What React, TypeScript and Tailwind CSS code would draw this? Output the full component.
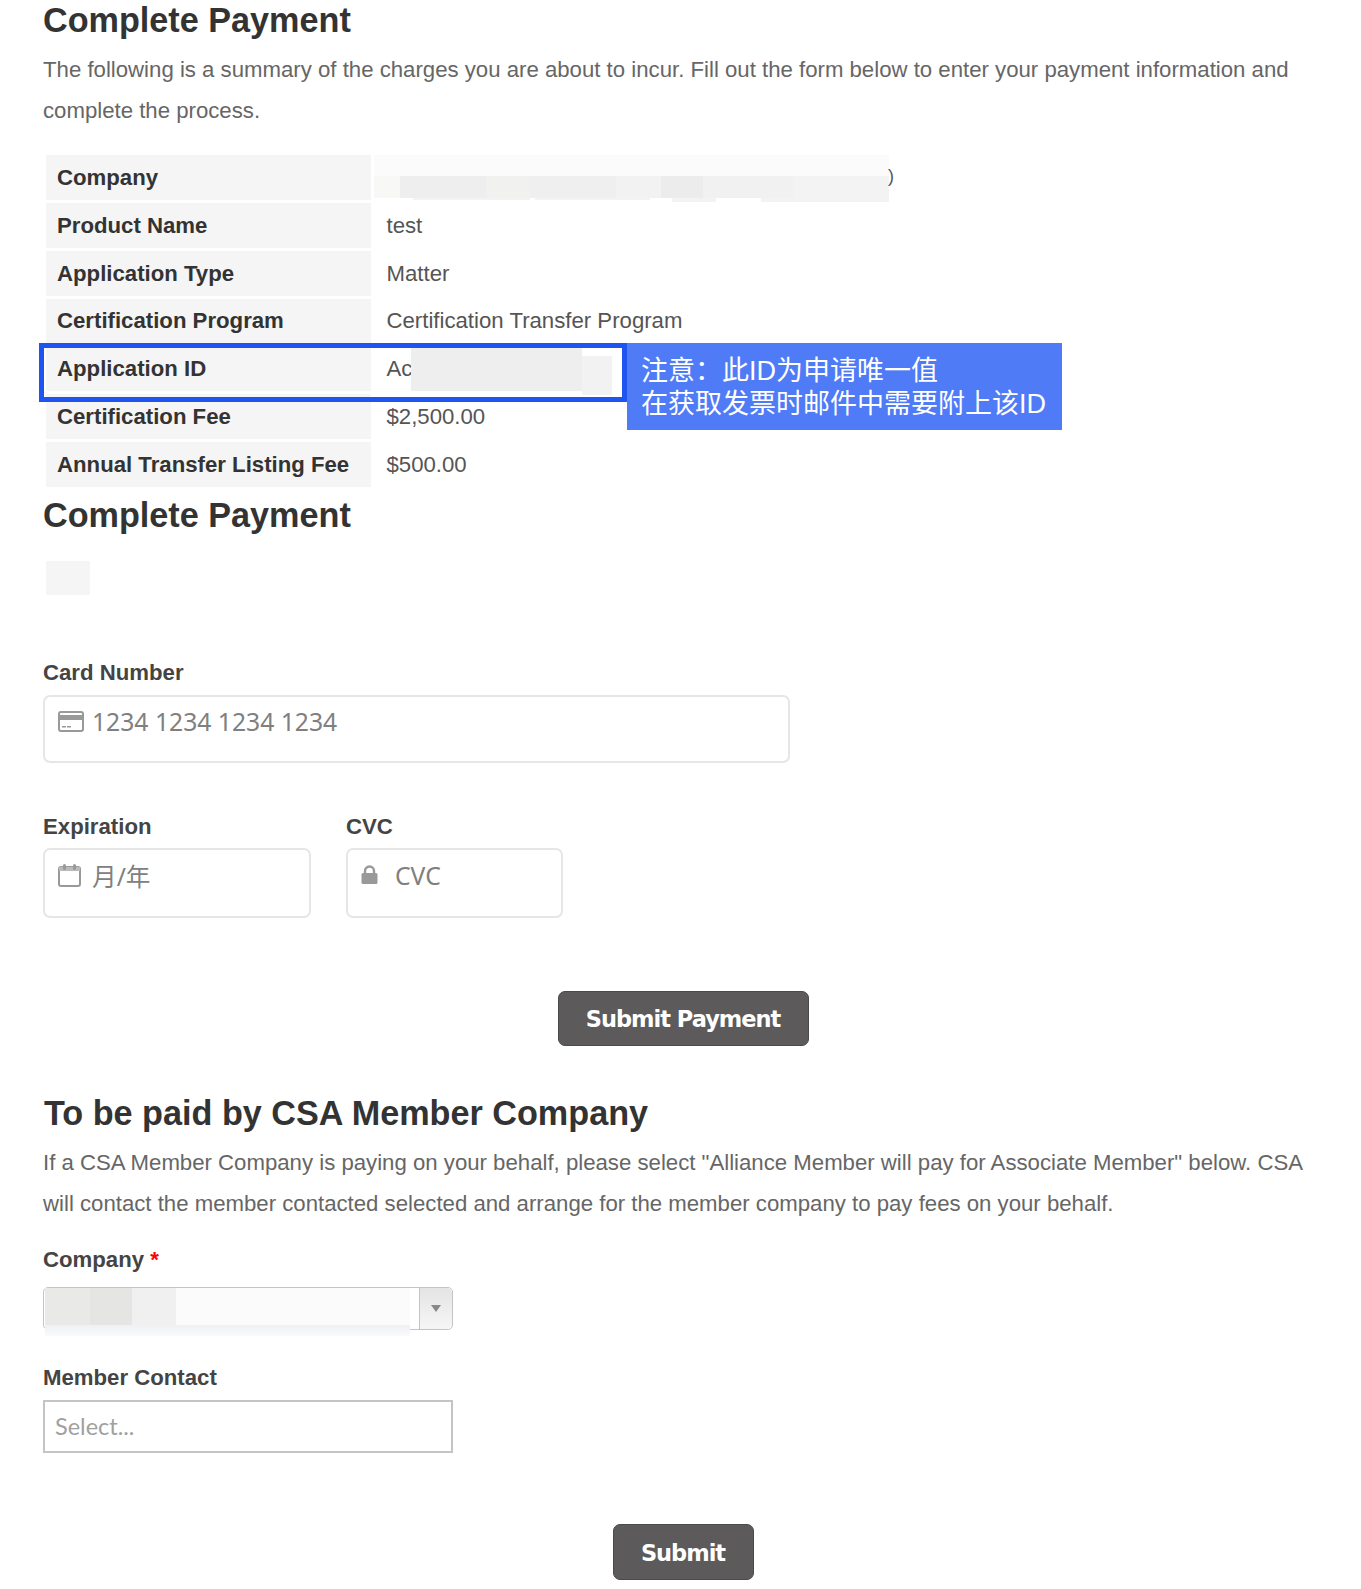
import React from 'react';

const sans = "font-['Liberation_Sans',Arial,sans-serif]";

// label + value rows of the charges summary
const rows = [
  ['Company', ''],
  ['Product Name', 'test'],
  ['Application Type', 'Matter'],
  ['Certification Program', 'Certification Transfer Program'],
  ['Application ID', 'Ac'],
  ['Certification Fee', '$2,500.00'],
  ['Annual Transfer Listing Fee', '$500.00'],
];

// blurred strips of the redacted company value: [width, colour]
const companyBlur: [number, string][] = [
  [26, '#f8f8f7'],
  [86, '#eeeeee'],
  [44, '#f1f1f0'],
  [86, '#efefef'],
  [45, '#f2f2f2'],
  [42, '#ececec'],
  [90, '#f1f1f1'],
  [96, '#f3f3f3'],
];

const Heading = ({ children, className = '' }: { children: React.ReactNode; className?: string }) => (
  <h2 className={`text-[34.2px] leading-[40px] font-bold text-[#333333] ${className}`}>{children}</h2>
);

const Label = ({ children, className = '' }: { children: React.ReactNode; className?: string }) => (
  <label className={`block text-[22.2px] leading-[30px] font-bold text-[#444444] ${className}`}>{children}</label>
);

const CardIcon = () => (
  <svg width="26" height="21" viewBox="0 0 26 21" className="shrink-0">
    <rect x="1" y="1" width="24" height="19" rx="2" fill="#fff" stroke="#999" strokeWidth="2" />
    <rect x="1" y="4" width="24" height="5" fill="#999" />
    <rect x="4" y="15" width="4" height="1.5" fill="#999" />
    <rect x="9" y="15" width="4" height="1.5" fill="#999" />
  </svg>
);

const CalendarIcon = () => (
  <svg width="23" height="24" viewBox="0 0 23 24" className="shrink-0 -mt-[1px]">
    <rect x="1" y="4" width="21" height="19" rx="2" fill="#fff" stroke="#999" strokeWidth="2" />
    <rect x="1" y="4" width="21" height="4" fill="#bbb" />
    <rect x="5" y="1" width="3" height="6" rx="1.5" fill="#999" />
    <rect x="15" y="1" width="3" height="6" rx="1.5" fill="#999" />
  </svg>
);

const LockIcon = () => (
  <svg width="17" height="19" viewBox="0 0 17 19" className="shrink-0">
    <path d="M4 9V6a4.5 4.5 0 0 1 9 0v3" fill="none" stroke="#999" strokeWidth="2.4" />
    <rect x="0.5" y="8" width="16" height="11" rx="1.5" fill="#999" />
  </svg>
);

const SubmitButton = ({ children, className = '' }: { children: React.ReactNode; className?: string }) => (
  <button className={`block mx-auto rounded-[7px] bg-[#5c5a5b] border border-[#4a4a4a] pt-[3px] text-white font-['DejaVu_Sans',sans-serif] font-bold text-[22.5px] tracking-[-1px] ${className}`}>
    {children}
  </button>
);

const App: React.FC = () => {
  return (
    <div className={`relative h-[1589px] overflow-hidden bg-white pl-[43px] ${sans} text-[22.2px] text-[#555555]`}>
      <Heading>Complete Payment</Heading>
      <p className="mt-[9px] w-[1290px] leading-[41px] text-[#666666]">
        The following is a summary of the charges you are about to incur. Fill out the form below to enter your payment information and complete the process.
      </p>

      {/* summary table */}
      <table className="mt-[21px] border-separate border-spacing-[3px]">
        <tbody>
          {rows.map(([name, value]) => (
            <tr key={name} className="h-[44.9px]">
              <th className="w-[324.5px] bg-[#f5f5f5] pl-[11px] text-left font-bold text-[#333333] p-0">{name}</th>
              <td className="pl-[13px] p-0 text-[#555555]">{value}</td>
            </tr>
          ))}
        </tbody>
      </table>

      <Heading className="mt-[5px]">Complete Payment</Heading>
      <div className="mt-[26px] ml-[3px] h-[34px] w-[44px] bg-[#f5f5f5]" />

      <Label className="mt-[63px]">Card Number</Label>
      <div className="mt-[7px] flex h-[68px] w-[747px] items-start gap-[8px] rounded-[7px] border-2 border-[#e6e6e6] pl-[13px] pt-[14px] font-['Noto_Sans',sans-serif] text-[24.7px] leading-[28px] text-[#808080]">
        <CardIcon />
        <span className="-mt-[3px]">1234 1234 1234 1234</span>
      </div>

      <div className="mt-[49px] flex gap-[35px]">
        <div>
          <Label>Expiration</Label>
          <div className="mt-[6px] flex h-[70px] w-[268px] items-start gap-[11px] rounded-[7px] border-2 border-[#e6e6e6] pl-[13px] pt-[14px] font-['Noto_Sans','Noto_Sans_CJK_SC',sans-serif] text-[24.7px] leading-[28px] text-[#808080]">
            <CalendarIcon />
            <span className="-mt-[1px]">月/年</span>
          </div>
        </div>
        <div>
          <Label>CVC</Label>
          <div className="mt-[6px] flex h-[70px] w-[217px] items-start gap-[17px] rounded-[7px] border-2 border-[#e6e6e6] pl-[13px] pt-[15px] font-['Noto_Sans',sans-serif] text-[24.7px] leading-[28px] text-[#808080]">
            <LockIcon />
            <span className="-mt-[3px]">CVC</span>
          </div>
        </div>
      </div>

      <div className="pr-[38px]">
        <SubmitButton className="mt-[73px] h-[55px] w-[251px]">Submit Payment</SubmitButton>
      </div>

      <Heading className="mt-[47px] ml-[1px]">To be paid by CSA Member Company</Heading>
      <p className="mt-[8.5px] w-[1290px] leading-[41px] text-[#666666]">
        If a CSA Member Company is paying on your behalf, please select "Alliance Member will pay for Associate Member" below. CSA will contact the member contacted selected and arrange for the member company to pay fees on your behalf.
      </p>

      <Label className="mt-[21.5px]">
        Company <span className="text-[#ff0000]">*</span>
      </Label>
      <div className="relative mt-[12px] flex h-[43px] w-[410px] justify-end rounded-[5px] border border-[#c4c4c4] bg-white">
        <div className="flex w-[33px] items-center justify-center rounded-r-[5px] border-l border-[#c4c4c4] bg-gradient-to-b from-[#e4e4e4] to-[#f6f6f6]">
          <span className="h-0 w-0 border-x-[5px] border-t-[7px] border-x-transparent border-t-[#888888]" />
        </div>
        {/* blurred company name */}
        <div className="absolute left-[1px] top-[0px] flex h-[48px] w-[365px] flex-col">
          <div className="flex h-[37px]">
            <div className="w-[45px] bg-[#e9e9e8]" />
            <div className="w-[42px] bg-[#e5e5e4]" />
            <div className="w-[44px] bg-[#f1f0f0]" />
            <div className="flex-1 bg-[#fbfbfb]" />
          </div>
          <div className="flex-1 bg-gradient-to-b from-[#eef1f4] to-[#f9fafb]" />
        </div>
      </div>

      <Label className="mt-[33px]">Member Contact</Label>
      <div className="mt-[7px] flex h-[53px] w-[410px] items-center border-2 border-[#c4c4c4] pl-[10px] font-['Lato',sans-serif] text-[23.5px] text-[#a0a0a0]">
        Select...
      </div>

      <div className="pr-[38px]">
        <SubmitButton className="mt-[71px] h-[56px] w-[141px]">Submit</SubmitButton>
      </div>

      {/* redaction over the company value */}
      <div className="absolute left-[374px] top-[155px] w-[515px]">
        <div className="h-[21px] bg-[#fbfbfb]" />
        <div className="flex h-[22px]">
          {companyBlur.map(([width, color], i) => (
            <div key={i} style={{ width, backgroundColor: color }} />
          ))}
        </div>
        <div className="flex h-[4px]">
          <div className="ml-[39px] h-[2px] w-[117px] bg-[#f3f3f3]" />
          <div className="ml-[5px] h-[2px] w-[115px] bg-[#f3f3f3]" />
          <div className="ml-[22px] h-[4px] w-[44px] bg-[#f3f3f3]" />
          <div className="ml-[45px] h-[4px] w-[128px] bg-[#f3f3f3]" />
        </div>
      </div>
      <span className="absolute left-[888px] top-[164px] text-[18px] leading-[24px] text-[#555555]">)</span>

      {/* annotation: highlighted row and note */}
      <div className="absolute left-[39px] top-[343px] h-[59px] w-[588px] border-[5px] border-[#1f54f0]">
        <div className="absolute left-[367px] top-0 h-[43px] w-[171px] bg-[#eeeeee]" />
        <div className="absolute left-[538px] top-[8px] h-[39px] w-[30px] bg-[#f2f2f2]" />
      </div>
      <div className="absolute left-[627px] top-[343px] h-[87px] w-[435px] bg-[#4f7bf7] pl-[14px] pt-[12px] font-['Liberation_Sans','Noto_Sans_CJK_SC',sans-serif] text-[27px] leading-[33px] text-white">
        注意：此ID为申请唯一值
        <br />
        在获取发票时邮件中需要附上该ID
      </div>
    </div>
  );
};

export default App;
